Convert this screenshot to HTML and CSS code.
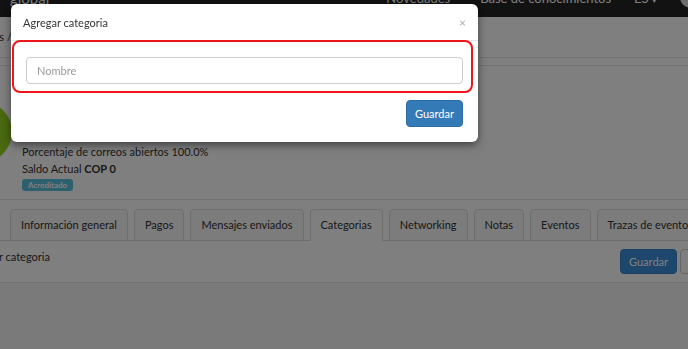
FILE: index.html
```html
<!DOCTYPE html>
<html lang="es">
<head>
    <meta charset="UTF-8">
    <meta name="viewport" content="width=device-width, initial-scale=1.0">
    <title>Contacto - Categorias</title>
    <link rel="stylesheet" href="styles.css">
</head>
<body>
    <nav class="navbar">
        <div class="brand">global</div>
        <div class="nav-links">
            <span class="nav-link">Novedades</span>
            <span class="nav-link">Base de conocimientos</span>
            <span class="nav-link">ES <span class="caret">&#9662;</span></span>
            <span class="nav-avatar"></span>
        </div>
    </nav>

    <div class="page">
        <div class="crumbs">Contactos / Detalle</div>

        <div class="profile">
            <div class="avatar"></div>
            <div class="info">
                <div class="line">Contacto global</div>
                <div class="line">Correos enviados 12</div>
                <div class="line">Porcentaje de correos abiertos 100.0%</div>
                <div class="line">Saldo Actual <b>COP 0</b></div>
                <span class="badge">Acreditado</span>
            </div>
        </div>

        <ul class="tabs">
            <li class="tab">Información general</li>
            <li class="tab">Pagos</li>
            <li class="tab">Mensajes enviados</li>
            <li class="tab active">Categorias</li>
            <li class="tab">Networking</li>
            <li class="tab">Notas</li>
            <li class="tab">Eventos</li>
            <li class="tab">Trazas de evento</li>
        </ul>

        <div class="tab-content">
            <div class="tab-title">Agregar categoria</div>
            <div class="actions">
                <button class="btn btn-primary-dark">Guardar</button>
                <button class="btn btn-default">Cancelar</button>
            </div>
        </div>
    </div>

    <div class="backdrop"></div>

    <div class="modal">
        <div class="modal-header">
            <span class="modal-title">Agregar categoria</span>
            <span class="close">&times;</span>
        </div>
        <div class="modal-body">
            <input class="input" type="text" placeholder="Nombre">
        </div>
        <div class="modal-footer">
            <button class="btn btn-primary">Guardar</button>
        </div>
    </div>
</body>
</html>
```

FILE: styles.css
```css
body {
    margin: 0;
    font-family: Lato, "Open Sans", sans-serif;
    font-size: 11px;
    color: #333;
    background-color: #f4f4f4;
    overflow: hidden;
    height: 349px;
}

.navbar {
    display: flex;
    height: 17px;
    overflow: hidden;
    background-color: #242424;
    color: #fff;
}

.brand {
    margin-top: -12px;
    padding-left: 10px;
    font-size: 15px;
    line-height: 20px;
}

.nav-links {
    display: flex;
    align-items: flex-start;
    margin-left: auto;
    margin-top: -10px;
    font-size: 13px;
    line-height: 17px;
}

.nav-link {
    margin-right: 30px;
}

.nav-link:nth-child(2),
.nav-link:nth-child(3) {
    margin-right: 23px;
}

.caret {
    font-size: 9px;
}

.nav-avatar {
    width: 22px;
    height: 22px;
    margin-top: -4px;
    margin-right: -14px;
    border-radius: 50%;
    background-color: #ddd;
}

.page {
    background-color: #fff;
}

.crumbs {
    height: 40px;
    line-height: 40px;
    margin-left: -45px;
    border-bottom: 1px solid #e5e5e5;
    margin-bottom: 7px;
}

.profile {
    display: flex;
    align-items: flex-start;
    border-top: 1px solid #e5e5e5;
    border-bottom: 1px solid #e5e5e5;
    padding-bottom: 8px;
}

.avatar {
    flex: none;
    width: 62px;
    height: 62px;
    margin-top: 35px;
    margin-left: -50px;
    border-radius: 50%;
    background-color: #94d01f;
}

.info {
    margin-left: 10px;
    padding-top: 43px;
}

.line {
    line-height: 17px;
}

.badge {
    display: inline-block;
    margin-top: 2px;
    padding: 0 6px;
    font-size: 8px;
    font-weight: bold;
    line-height: 12px;
    color: #fff;
    background-color: #5bc0de;
    border-radius: 3px;
}

.tabs {
    display: flex;
    margin: 9px 0 0;
    padding: 0 0 0 10px;
    list-style: none;
    border-bottom: 1px solid #ddd;
    white-space: nowrap;
}

.tab {
    flex: none;
    margin-right: 6px;
    margin-bottom: -1px;
    padding: 0 10px;
    line-height: 30px;
    border: 1px solid #ddd;
    border-radius: 4px 4px 0 0;
    background-color: #f8f8f8;
}

.tab.active {
    background-color: #fff;
    border-bottom-color: #fff;
}

.tab-content {
    display: flex;
    justify-content: space-between;
    align-items: flex-start;
    padding: 8px 0;
    margin-left: -35px;
    margin-right: -52px;
    border-bottom: 1px solid #e5e5e5;
}

.tab-title {
    line-height: 15px;
}

.actions {
    display: flex;
    gap: 3px;
}

.btn {
    height: 25px;
    padding: 0 8px;
    font-family: inherit;
    font-size: 11px;
    border: 1px solid transparent;
    border-radius: 4px;
}

.btn-primary {
    height: 27px;
    color: #fff;
    background-color: #337ab7;
    border-color: #2e6da4;
}

.btn-primary-dark {
    color: #fff;
    background-color: #3a8fd8;
    border-color: #3483c8;
}

.btn-default {
    color: #333;
    background-color: #fff;
    border-color: #ccc;
}

.backdrop {
    position: fixed;
    top: 0;
    left: 0;
    right: 0;
    bottom: 0;
    background-color: rgba(0, 0, 0, 0.5);
}

.modal {
    position: absolute;
    top: 4px;
    left: 11px;
    width: 467px;
    height: 138px;
    background-color: #fff;
    border-radius: 6px;
    box-shadow: 0 3px 9px rgba(0, 0, 0, 0.5);
}

.modal-header {
    display: flex;
    justify-content: space-between;
    align-items: center;
    height: 36px;
    padding: 0 12px;
    border-bottom: 1px solid #e5e5e5;
}

.modal-title {
    font-size: 11px;
    color: #333;
}

.close {
    font-size: 12px;
    color: #aaa;
}

.modal-body {
    margin: -1px 5px 0 1px;
    padding: 15px 8px 7px 12px;
    border: 2px solid #f0141b;
    border-radius: 8px;
}

.input {
    display: block;
    box-sizing: border-box;
    width: 100%;
    height: 27px;
    padding: 0 10px;
    font-family: inherit;
    font-size: 11px;
    color: #555;
    border: 1px solid #ccc;
    border-radius: 4px;
}

.input::placeholder {
    color: #999;
}

.modal-footer {
    display: flex;
    justify-content: flex-end;
    padding: 7px 15px 15px;
}
```
